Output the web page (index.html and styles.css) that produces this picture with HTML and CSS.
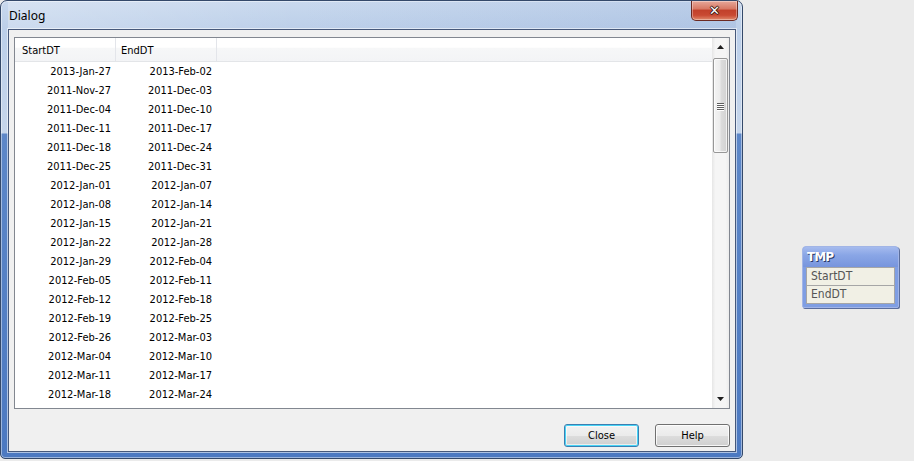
FILE: index.html
```html
<!DOCTYPE html>
<html>
<head>
<meta charset="utf-8">
<title>Dialog</title>
<link rel="stylesheet" href="styles.css">
</head>
<body>
<div class="desktop">
  <div class="window">
    <div class="titlebar">
      <span class="title">Dialog</span>
      <div class="close-x"><span class="x-glyph">✕</span></div>
    </div>
    <div class="client">
      <div class="list">
        <div class="list-body">
          <div class="list-header">
            <div class="hcell c1">StartDT</div>
            <div class="hcell c2">EndDT</div>
            <div class="hcell rest"></div>
          </div>
          <div class="rows">
            <div class="row"><span class="cell c1">2013-Jan-27</span><span class="cell c2">2013-Feb-02</span></div>
            <div class="row"><span class="cell c1">2011-Nov-27</span><span class="cell c2">2011-Dec-03</span></div>
            <div class="row"><span class="cell c1">2011-Dec-04</span><span class="cell c2">2011-Dec-10</span></div>
            <div class="row"><span class="cell c1">2011-Dec-11</span><span class="cell c2">2011-Dec-17</span></div>
            <div class="row"><span class="cell c1">2011-Dec-18</span><span class="cell c2">2011-Dec-24</span></div>
            <div class="row"><span class="cell c1">2011-Dec-25</span><span class="cell c2">2011-Dec-31</span></div>
            <div class="row"><span class="cell c1">2012-Jan-01</span><span class="cell c2">2012-Jan-07</span></div>
            <div class="row"><span class="cell c1">2012-Jan-08</span><span class="cell c2">2012-Jan-14</span></div>
            <div class="row"><span class="cell c1">2012-Jan-15</span><span class="cell c2">2012-Jan-21</span></div>
            <div class="row"><span class="cell c1">2012-Jan-22</span><span class="cell c2">2012-Jan-28</span></div>
            <div class="row"><span class="cell c1">2012-Jan-29</span><span class="cell c2">2012-Feb-04</span></div>
            <div class="row"><span class="cell c1">2012-Feb-05</span><span class="cell c2">2012-Feb-11</span></div>
            <div class="row"><span class="cell c1">2012-Feb-12</span><span class="cell c2">2012-Feb-18</span></div>
            <div class="row"><span class="cell c1">2012-Feb-19</span><span class="cell c2">2012-Feb-25</span></div>
            <div class="row"><span class="cell c1">2012-Feb-26</span><span class="cell c2">2012-Mar-03</span></div>
            <div class="row"><span class="cell c1">2012-Mar-04</span><span class="cell c2">2012-Mar-10</span></div>
            <div class="row"><span class="cell c1">2012-Mar-11</span><span class="cell c2">2012-Mar-17</span></div>
            <div class="row"><span class="cell c1">2012-Mar-18</span><span class="cell c2">2012-Mar-24</span></div>
          </div>
        </div>
        <div class="vscroll">
          <div class="sb-btn"><svg width="7" height="4" viewBox="0 0 7 4"><path d="M0 4 L3.5 0 L7 4 Z" fill="#1e1e1e"/></svg></div>
          <div class="sb-track">
            <div class="sb-thumb">
              <div class="grip"><i></i><i></i><i></i><i></i></div>
            </div>
          </div>
          <div class="sb-btn"><svg width="7" height="4" viewBox="0 0 7 4"><path d="M0 0 L7 0 L3.5 4 Z" fill="#1e1e1e"/></svg></div>
        </div>
      </div>
      <div class="footer">
        <button class="btn default">Close</button>
        <button class="btn">Help</button>
      </div>
    </div>
  </div>

  <div class="table-box">
    <div class="tb-title">TMP</div>
    <div class="tb-field">StartDT</div>
    <div class="tb-field">EndDT</div>
  </div>
</div>
</body>
</html>
```
FILE: styles.css
```css
* { box-sizing: border-box; }
html, body {
  margin: 0;
  padding: 0;
  background: #ebebeb;
  width: 914px;
  height: 461px;
  overflow: hidden;
}
.desktop {
  position: relative;
  width: 914px;
  height: 461px;
  font-family: "DejaVu Sans Condensed", "Liberation Sans", sans-serif;
  font-size: 11px;
  color: #000;
}
.window {
  width: 743px;
  height: 459px;
  border: 1px solid #34496a;
  border-radius: 7px 7px 5px 5px;
  background: linear-gradient(to bottom, #c9d9ee 0, #bccfe9 28px, #c5d5eb 132px, #5d87c8 133px, #4c79c1 100%);
  box-shadow: inset 0 0 0 1px rgba(255,255,255,0.45);
  padding: 0 6px 6px 7px;
  display: flex;
  flex-direction: column;
}
.titlebar {
  height: 28px;
  display: flex;
  align-items: flex-start;
  justify-content: space-between;
  background: linear-gradient(to right, rgba(255,255,255,0.25), rgba(255,255,255,0) 40%, rgba(80,120,190,0.12));
}
.title {
  font-family: "Noto Sans", "Open Sans", sans-serif;
  font-size: 12px;
  line-height: 16px;
  margin-top: 7px;
  margin-left: 1px;
  color: #000;
}
.close-x {
  width: 47px;
  height: 20px;
  margin-right: -2px;
  border: 1px solid #6b2a22;
  border-top: none;
  border-radius: 0 0 5px 5px;
  background: linear-gradient(to bottom, #e7a89a 0, #d97a66 40%, #c2412b 50%, #c94a33 75%, #e08a6c 100%);
  box-shadow: inset 0 0 0 1px rgba(255,255,255,0.35);
  display: flex;
  align-items: center;
  justify-content: center;
}
.x-glyph {
  color: #fff;
  font-family: "DejaVu Sans", sans-serif;
  font-weight: bold;
  font-size: 13px;
  line-height: 13px;
  text-shadow: 0 0 1px #3a1a14, 1px 0 0 #3a1a14, -1px 0 0 #3a1a14, 0 1px 0 #3a1a14, 0 -1px 0 #3a1a14;
}
.client {
  flex: 1;
  border: 1px solid #46587a;
  box-shadow: 0 0 0 1px rgba(255,255,255,0.55);
  background: #f0f0f0;
  padding: 7px 5px 0 5px;
  display: flex;
  flex-direction: column;
}
.list {
  height: 372px;
  border: 1px solid #828790;
  background: #fff;
  display: flex;
  overflow: hidden;
}
.list-body {
  flex: 1;
  overflow: hidden;
}
.list-header {
  height: 24px;
  display: flex;
  background: linear-gradient(to bottom, #ffffff 0, #ffffff 40%, #f6f7f8 45%, #f3f4f6 100%);
  border-bottom: 1px solid #e3e5e8;
}
.hcell {
  padding: 6px 0 0 0;
  line-height: 14px;
  border-right: 1px solid #e3e5ea;
}
.hcell.c1 { width: 101px; padding-left: 7px; }
.hcell.c2 { width: 101px; padding-left: 5px; }
.hcell.rest { flex: 1; border-right: none; }
.rows { display: flex; flex-direction: column; }
.row {
  height: 19px;
  padding-top: 1px;
  line-height: 18px;
  display: flex;
  flex: none;
}
.cell { text-align: right; }
.cell.c1 { width: 101px; padding-right: 5px; }
.cell.c2 { width: 101px; padding-right: 5px; }
.vscroll {
  width: 17px;
  display: flex;
  flex-direction: column;
  background: linear-gradient(to right, #e6e6e6, #f5f5f5 20%, #f5f5f5 80%, #ececec);
}
.sb-btn {
  height: 18px;
  display: flex;
  align-items: center;
  justify-content: center;
}
.sb-btn svg { display: block; }
.sb-track { flex: 1; padding: 2px 1px 0 1px; }
.sb-thumb {
  height: 95px;
  border: 1px solid #979797;
  border-radius: 2px;
  background: linear-gradient(to right, #f4f4f4 0, #ececec 45%, #dcdcdc 55%, #d2d2d2 100%);
  box-shadow: inset 0 0 0 1px rgba(255,255,255,0.7);
  display: flex;
  align-items: center;
  justify-content: center;
}
.grip {
  display: flex;
  flex-direction: column;
  gap: 1px;
  margin-top: 1px;
}
.grip i {
  display: block;
  width: 7px;
  height: 1px;
  background: #5e5e5e;
  box-shadow: 0 1px 0 #fff;
}
.footer {
  display: flex;
  justify-content: flex-end;
  gap: 16px;
  padding-top: 15px;
}
.btn {
  width: 75px;
  height: 23px;
  font-family: "DejaVu Sans Condensed", "Liberation Sans", sans-serif;
  font-size: 11px;
  color: #000;
  border: 1px solid #707070;
  border-radius: 3px;
  background: linear-gradient(to bottom, #f2f2f2 0, #ebebeb 50%, #dddddd 51%, #cfcfcf 100%);
  box-shadow: inset 0 0 0 1px rgba(255,255,255,0.8);
  padding: 0;
  margin: 0;
}
.btn.default {
  border-color: #3c7fb1;
  box-shadow: inset 0 0 0 1px #48d4f6, inset 0 0 0 2px rgba(255,255,255,0.6);
}
.table-box {
  position: absolute;
  left: 802px;
  top: 246px;
  width: 97px;
  height: 62px;
  border: 1px solid #a2b5e6;
  border-radius: 4px 4px 2px 2px;
  background: #7f9ee3;
  box-shadow: 1px 1px 0 #5a6d9c;
  padding: 0 3px 3px 3px;
}
.tb-title {
  height: 20px;
  line-height: 20px;
  padding-left: 4px;
  color: #fff;
  font-family: "DejaVu Sans Condensed", "Liberation Sans", sans-serif;
  font-weight: bold;
  font-size: 13px;
  letter-spacing: -0.5px;
  text-shadow: 1px 1px 0 #2a3a66;
  background: linear-gradient(to bottom, #a6bbee 0, #8aa6e6 40%, #7795dd 100%);
  margin: 0 -3px;
  border-radius: 3px 3px 0 0;
}
.tb-field {
  height: 19px;
  line-height: 17px;
  border: 1px solid #a6a6a6;
  background: #f1f0e5;
  color: #555;
  font-size: 12px;
  padding-left: 4px;
}
.tb-field + .tb-field { border-top: none; height: 18px; }
```
